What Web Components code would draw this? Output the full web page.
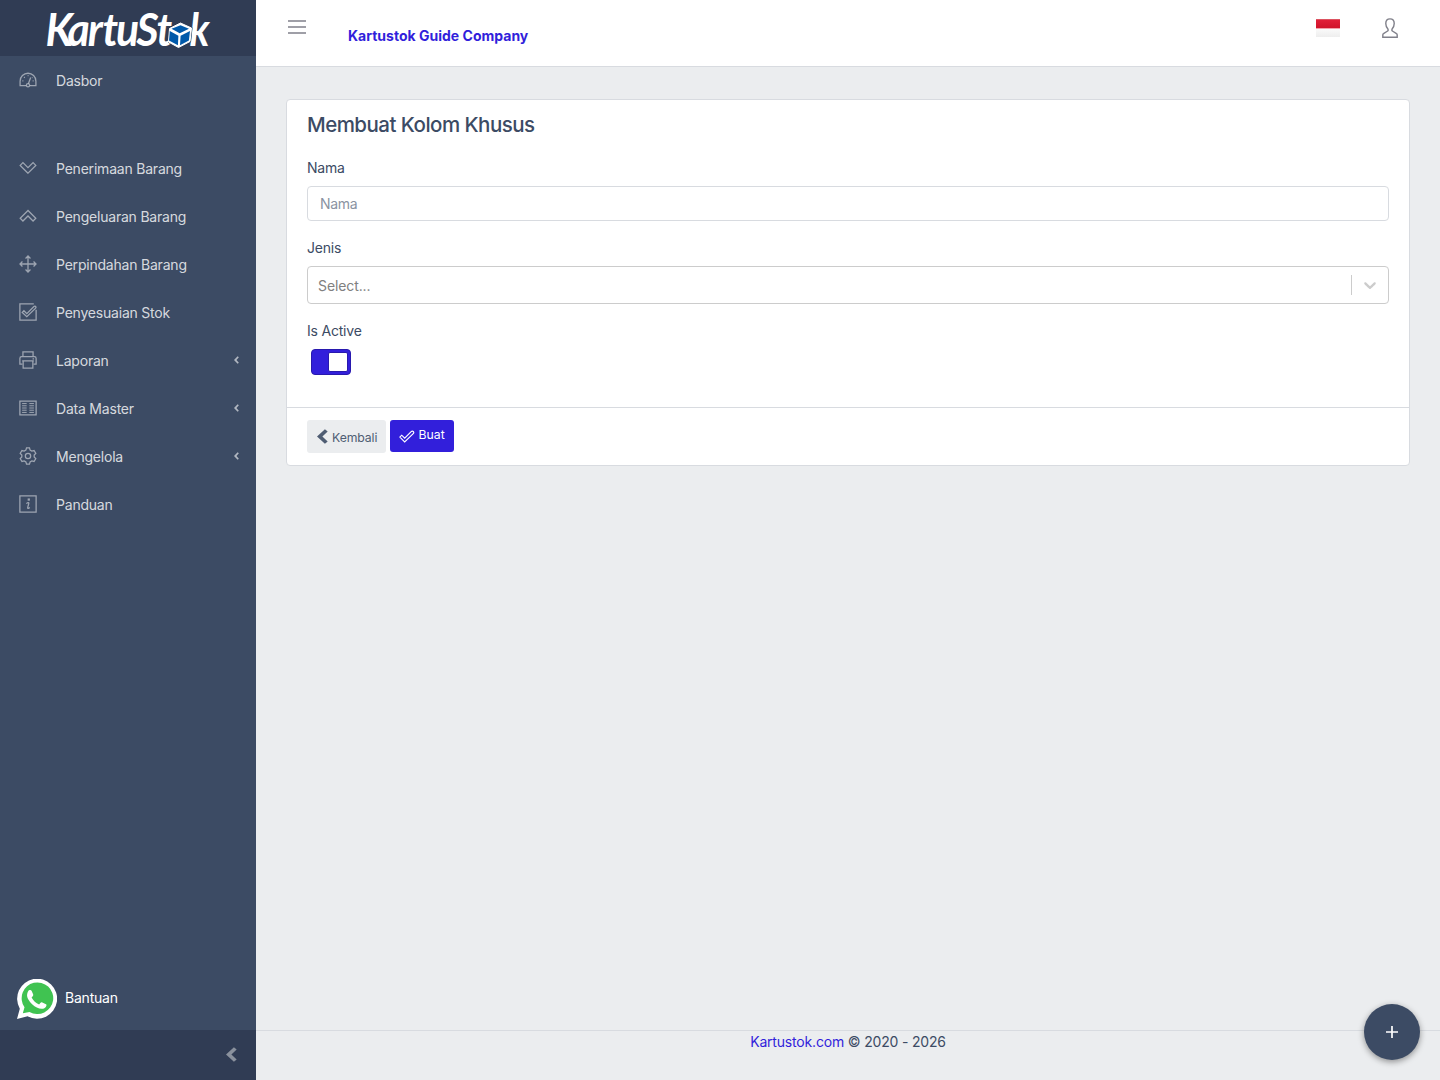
<!DOCTYPE html>
<html lang="id">
<head>
<meta charset="utf-8">
<title>Kartustok</title>
<style>
body{margin:0;font:400 14px/21px Inter,"Noto Sans",sans-serif;letter-spacing:-.21px;color:#3c4b64;background:#ebedef}
</style>
</head>
<body>
<ks-app></ks-app>
<script>
const define = (name, html) => customElements.define(name, class extends HTMLElement {
  constructor() {
    super();
    const t = document.createElement('template');
    t.innerHTML = typeof html === 'function' ? html(this) : html;
    this.attachShadow({mode: 'open'}).append(t.content.cloneNode(true));
  }
});

// Line icons on a 512-unit grid
const icons = {
  speed: '<g transform="translate(0 -26)"><path d="M104 439H31V315a225 225 0 0 1 450 0v124H310M104 439h98"/><path d="M268 383L332 210"/><circle cx="256" cy="430" r="46"/><path d="M96 304h28M144 196l20 20M246 158h24M388 304h28M372 222l12-12"/></g>',
  down: '<path d="M256 404L34 182l78-78 144 144 144-144 78 78z"/>',
  up: '<path d="M256 98L34 320l78 78 144-144 144 144 78-78z"/>',
  move: '<path d="M256 30v452M30 256h452M186 98l70-70 70 70M186 414l70 70 70-70M98 186l-70 70 70 70M414 186l70 70-70 70"/>',
  task: '<path d="M420 25H25v462h462V190"/><path d="M92 267l48-48 82 82L418 105c20-20 48-20 60 0 10 18 2 36-10 48L222 391z"/>',
  print: '<path d="M112 150V25h288v125M92 375H25V210q0-48 48-48h366q48 0 48 48v165h-67M118 280h276v207H118zM90 280h332M386 222h40"/>',
  list: '<path d="M25 58h462v396H25z"/><path stroke-width="28" d="M88 130h130M88 193h130M88 256h130M88 319h130M88 382h130M294 130h130M294 193h130M294 256h130M294 319h130M294 382h130"/>',
  gear: '<path d="M214 25h84l18 63 48 28 64-16 50 80-46 48v56l46 48-50 80-64-16-48 28-18 63h-84l-18-63-48-28-64 16-50-80 46-48v-56l-46-48 50-80 64 16 48-28z"/><circle cx="256" cy="256" r="76"/>',
  info: '<path d="M25 25h462v462H25z"/><path d="M211 245c25-35 74-44 68-7l-31 116c-7 48 34 30 54 0"/><path d="M264 116h28v28h-28z"/>',
  user: '<path d="M206 290c-42-44-58-94-58-148 0-75 44-119 108-119s108 44 108 119c0 54-16 104-58 148v36l116 74q18 10 18 34v59H72v-59q0-24 18-34l116-74z"/>',
  check: '<path d="M28 300l62-62 98 98L402 122c24-24 54-22 74 0 20 24 14 46-6 66L188 462z"/>',
};
define('ks-icon', h => `<style>:host{display:block;width:17.5px;height:17.5px;flex:none}svg{display:block;width:100%;height:100%;fill:none;stroke:currentColor;stroke-width:${h.getAttribute('weight') || 36}}</style>
<svg viewBox="0 0 512 512">${icons[h.getAttribute('name')]}</svg>`);

define('ks-chevron', `<style>:host{display:block;width:5px;height:8px;flex:none}svg{display:block;width:100%;height:100%}</style>
<svg viewBox="0 0 10 15" preserveAspectRatio="none"><path d="M0 7.5L7.2.3 9.7 2.5 4.9 7.5l4.8 5-2.5 2.2z" fill="currentColor"/></svg>`);

define('ks-nav-item', h => `<style>
:host{display:flex;height:48px;align-items:center;color:rgba(255,255,255,.8)}
ks-icon{width:18px;height:18px;margin:0 19px;color:rgba(255,255,255,.5)}
span{flex:1}
ks-chevron{margin:0 17.500px 0 0;color:rgba(255,255,255,.6)}
</style><ks-icon name="${h.getAttribute('icon')}"></ks-icon><span><slot></slot></span>${h.hasAttribute('group') ? '<ks-chevron></ks-chevron>' : ''}`);

define('ks-logo', `<style>:host{display:block;height:56px;background:#303c54}svg{display:block}
text{font:italic 700 46.5px Lato,sans-serif;fill:#fff}</style>
<svg width="256" height="56" viewBox="0 0 256 56">
<text transform="translate(0 46) scale(.92 1)" x="49.500 73.500 95.500 111.500 126 148.500 170">KartuSt</text>
<text transform="translate(189.500 46) scale(.86 1)">k</text>
<path d="M180.500 22l12 5.500-1.500 14.500-12 6-11-5.500 1-14.500z" fill="#303c54"/>
<path d="M180.500 23l11 5-1.500 13.500-11.500 6-10-5.500 1-13.500z" fill="#fff" stroke="#fff" stroke-linejoin="round"/>
<path d="M180.500 25.200l8.500 3.500-9.300 4.600-8.200-4.600z M169.800 31l8.600 4.800-.5 9.500-8.900-4.800z M190 31l-9.400 4.800-.6 9.500 8.900-4.800z" fill="#0059aa"/>
</svg>`);

define('ks-help', `<style>:host{display:flex;align-items:center;height:40px;margin:0 0 11px 17px;gap:8px;color:#fff}span{padding-bottom:3px}</style>
<svg width="40" height="40" viewBox="0 0 40 40"><path d="M0 40l2.800-10.300A20 20 0 1 1 10.600 37.300z" fill="#fff"/><path d="M5.800 34.300l1.700-6A15.800 15.800 0 1 1 12.500 32.900z" fill="#40c351"/><path d="M12 11.300c1.200-.7 2.200-.3 2.700.7l1.500 3.500c.3.900-.6 2-1.600 3 1.800 3.400 4.200 5.600 7.500 7 1-1 1.700-2.600 2.700-2.300l4.200 2c1.200.6 0 3.500-2 4.200-3.600 1.500-8.300-1-11.600-4-3.300-3-6-7-5.200-10.300.3-1.900 1-3.200 1.800-3.800z" fill="#fff"/></svg><span>Bantuan</span>`);

define('ks-sidebar', `<style>
:host{display:flex;flex-direction:column;width:256px;flex:none;background:#3c4b64}
nav{flex:1}.gap{height:40px}
.min{height:50px;background:#303c54;display:flex;align-items:center;justify-content:flex-end;color:#8a919d}
.min ks-chevron{width:11px;height:15px;margin:0 19.500px 1px 0}
</style>
<ks-logo></ks-logo>
<nav><ks-nav-item icon="speed">Dasbor</ks-nav-item><div class="gap"></div>
<ks-nav-item icon="down">Penerimaan Barang</ks-nav-item>
<ks-nav-item icon="up">Pengeluaran Barang</ks-nav-item>
<ks-nav-item icon="move">Perpindahan Barang</ks-nav-item>
<ks-nav-item icon="task">Penyesuaian Stok</ks-nav-item>
<ks-nav-item icon="print" group>Laporan</ks-nav-item>
<ks-nav-item icon="list" group>Data Master</ks-nav-item>
<ks-nav-item icon="gear" group>Mengelola</ks-nav-item>
<ks-nav-item icon="info">Panduan</ks-nav-item></nav>
<ks-help></ks-help>
<div class="min"><ks-chevron></ks-chevron></div>`);

define('ks-header', `<style>
:host{display:flex;height:66px;background:#fff;border-bottom:1px solid #d8dbe0;align-items:flex-start}
.menu{margin:20px 0 0 32px}
b{margin:25px auto 0 42px;color:#321fdb;font-weight:700;letter-spacing:.01px}
.flag{width:24px;height:18px;margin:19px 40px 0 0;background:linear-gradient(#dc5361 0 1px,#e11f38 1px,#d0142a 9px,#f3a0aa 9px 10px,#fafafa 10px,#eee)}
ks-icon{width:20px;height:20px;margin:18px 40px 0 0;color:#80808a}
</style>
<svg class="menu" width="18" height="14" viewBox="0 0 18 14"><path d="M0 1h18M0 7h18M0 13h18" stroke="#80808a" stroke-width="1.400"/></svg>
<b>Kartustok Guide Company</b><div class="flag"></div><ks-icon name="user" weight="36"></ks-icon>`);

define('ks-field', h => `<style>:host{display:block}label{display:block;margin-bottom:8px}</style><label>${h.getAttribute('label')}</label><slot></slot>`);

define('ks-input', `<style>:host{display:block}input{display:block;box-sizing:border-box;width:100%;height:35px;padding:0 12px;border:1px solid #d8dbe0;border-radius:4px;font:inherit;letter-spacing:-.3px;background:#fff;outline:0}input::placeholder{color:#8a93a2;opacity:1}</style><input placeholder="Nama">`);

define('ks-select', `<style>:host{display:flex;box-sizing:border-box;height:38px;border:1px solid #ccc;border-radius:4px;align-items:center;color:gray;padding-left:10px;letter-spacing:-.1px}
span{flex:1}i{width:1px;height:20px;background:#ccc}svg{margin:0 8px}</style>
<span>Select...</span><i></i><svg width="20" height="20" viewBox="0 0 20 20" fill="#ccc"><path d="M4.516 7.548c.436-.446 1.043-.481 1.576 0L10 11.295l3.908-3.747c.533-.481 1.141-.446 1.574 0 .436.445.408 1.197 0 1.615-.406.418-4.695 4.502-4.695 4.502a1.095 1.095 0 0 1-1.576 0S4.924 9.581 4.516 9.163c-.409-.418-.436-1.170 0-1.615z"/></svg>`);

define('ks-switch', `<style>:host{display:flex;box-sizing:border-box;width:40px;height:26px;margin-left:4px;border:1px solid #2819ae;border-radius:4px;background:#321fdb;justify-content:flex-end;align-items:center;padding-right:2px}i{box-sizing:border-box;width:20px;height:20px;border:1px solid #2819ae;border-radius:2px;background:#fff}</style><i></i>`);

define('ks-button', h => `<style>:host{display:flex;align-items:center;box-sizing:border-box;border-radius:3px;font-size:12.25px;line-height:18px;letter-spacing:-.1px;width:79px;height:33px;padding-left:10px;background:#ebedef;color:#4f5d73}
:host([primary]){width:64px;height:32px;background:#321fdb;color:#fff;padding-left:9px;letter-spacing:0}
span{padding-top:3px;margin-left:4px}:host([primary]) span{padding:0 0 2px;margin-left:4px}
ks-chevron{width:11px;height:15px;margin-top:-1px}ks-icon{width:15.5px;height:15.5px;margin-bottom:1px}
</style>${h.hasAttribute('primary') ? '<ks-icon name="check" weight="38"></ks-icon>' : '<ks-chevron></ks-chevron>'}<span><slot></slot></span>`);

define('ks-card', `<style>
:host{display:block;margin:32px 30px 0;border:1px solid #d8dbe0;border-radius:4px;background:#fff}
.body{padding:12px 20px 32px;display:flex;flex-direction:column}
h4{margin:0 0 19px;font-size:20.5px;line-height:26px;font-weight:500;letter-spacing:-.53px}
.jenis{margin-top:16px}.active{margin-top:16px}
footer{display:flex;gap:4px;align-items:flex-start;border-top:1px solid #d8dbe0;padding:12px 20px}
</style>
<div class="body"><h4>Membuat Kolom Khusus</h4>
<ks-field label="Nama"><ks-input></ks-input></ks-field>
<ks-field class="jenis" label="Jenis"><ks-select></ks-select></ks-field>
<ks-field class="active" label="Is Active"><ks-switch></ks-switch></ks-field></div>
<footer><ks-button>Kembali</ks-button><ks-button primary>Buat</ks-button></footer>`);

define('ks-footer', `<style>:host{display:block;height:49px;border-top:1px solid #d8dbe0;text-align:center;letter-spacing:-.18px}span{color:#321fdb}</style><div><span>Kartustok.com</span> © 2020 - 2026</div>`);

define('ks-fab', `<style>:host{display:flex;position:fixed;right:20px;bottom:20px;width:56px;height:56px;border-radius:50%;background:#3c4b64;align-items:center;justify-content:center;box-shadow:0 2px 6px rgba(0,0,0,.4)}</style><svg width="12" height="12"><path d="M6 0v12M0 6h12" stroke="#fff" stroke-width="1.700"/></svg>`);

define('ks-app', `<style>:host{display:flex;height:1080px}main{flex:1;display:flex;flex-direction:column}section{flex:1}</style>
<ks-sidebar></ks-sidebar><main><ks-header></ks-header><section><ks-card></ks-card></section><ks-footer></ks-footer></main><ks-fab></ks-fab>`);
</script>
</body>
</html>
